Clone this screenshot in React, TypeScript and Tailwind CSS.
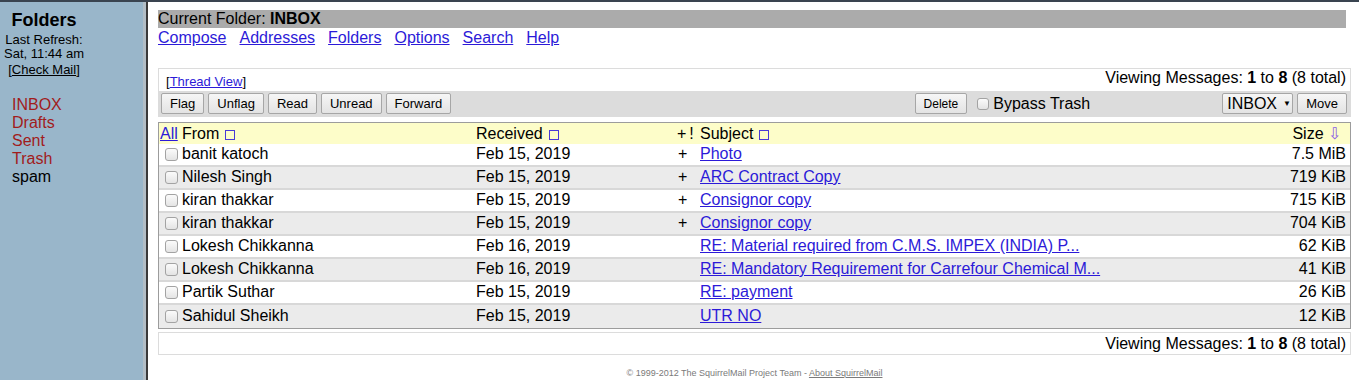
import React from 'react';

interface Msg {
  from: string;
  date: string;
  plus: boolean;
  subject: string;
  size: string;
}

const messages: Msg[] = [
  { from: 'banit katoch', date: 'Feb 15, 2019', plus: true, subject: 'Photo', size: '7.5 MiB' },
  { from: 'Nilesh Singh', date: 'Feb 15, 2019', plus: true, subject: 'ARC Contract Copy', size: '719 KiB' },
  { from: 'kiran thakkar', date: 'Feb 15, 2019', plus: true, subject: 'Consignor copy', size: '715 KiB' },
  { from: 'kiran thakkar', date: 'Feb 15, 2019', plus: true, subject: 'Consignor copy', size: '704 KiB' },
  { from: 'Lokesh Chikkanna', date: 'Feb 16, 2019', plus: false, subject: 'RE: Material required from C.M.S. IMPEX (INDIA) P...', size: '62 KiB' },
  { from: 'Lokesh Chikkanna', date: 'Feb 16, 2019', plus: false, subject: 'RE: Mandatory Requirement for Carrefour Chemical M...', size: '41 KiB' },
  { from: 'Partik Suthar', date: 'Feb 15, 2019', plus: false, subject: 'RE: payment', size: '26 KiB' },
  { from: 'Sahidul Sheikh', date: 'Feb 15, 2019', plus: false, subject: 'UTR NO', size: '12 KiB' },
];

const folders = [
  { name: 'INBOX', red: true },
  { name: 'Drafts', red: true },
  { name: 'Sent', red: true },
  { name: 'Trash', red: true },
  { name: 'spam', red: false },
];

const Check = () => (
  <span className="inline-block w-[13px] h-[13px] rounded-[3px] border border-[#a3a3a3] bg-gradient-to-b from-[#fbfbfb] to-[#e4e4e4]" />
);

const SortBox = () => (
  <span className="inline-block w-[10px] h-[10px] border border-[#4a3ad6] ml-[6px] translate-y-[1px]" />
);

const Btn = ({ label, small }: { label: string; small?: boolean }) => (
  <button className={`h-[21px] px-[8px] border border-[#a6a6a6] rounded-[2px] bg-gradient-to-b from-[#f6f6f6] to-[#e3e3e3] text-black leading-none ${small ? 'text-[12px]' : 'text-[13px]'}`}>
    {label}
  </button>
);

const Link = ({ children, className = '' }: { children: React.ReactNode; className?: string }) => (
  <a href="#" className={`text-[#2c1ad8] underline ${className}`}>{children}</a>
);

const ViewingText = () => (
  <span className="text-[16px] text-black">
    Viewing Messages: <b>1</b> to <b>8</b> (8 total)
  </span>
);

export default function App() {
  return (
    <div className="flex h-[380px] overflow-hidden bg-white border-t-2 border-[#3a4450] font-['Liberation_Sans',Arial,sans-serif] text-black">
      {/* left frame */}
      <div className="w-[143px] shrink-0 bg-[#99b6ca] pt-[7px]">
        <div className="w-[88px] text-center">
          <div className="text-[18px] font-bold leading-[22px]">Folders</div>
          <div className="mt-[2px] text-[13px] leading-[14px]">Last Refresh:</div>
          <div className="text-[13px] leading-[14px]">Sat, 11:44 am</div>
          <div className="mt-[1px] text-[13px] leading-[15px]">
            [<a href="#" className="text-black underline">Check Mail</a>]
          </div>
        </div>
        <div className="mt-[19px] pl-[12px]">
          {folders.map((f) => (
            <div key={f.name} className={`text-[16px] leading-[18px] ${f.red ? 'text-[#a11c1c]' : 'text-black'}`}>
              {f.name}
            </div>
          ))}
        </div>
      </div>
      <div className="w-[3px] shrink-0 bg-[#b3bec6]" />
      <div className="w-[2px] shrink-0 bg-[#3a3a3a]" />

      {/* right frame */}
      <div className="flex-1 pl-[10px] pr-[8px] pt-[8px]">
        <div className="mr-[5px] h-[18px] bg-[#ababab] text-[16px] leading-[18px]">
          Current Folder: <b>INBOX</b>
        </div>
        <div className="flex gap-[13px] text-[16px] leading-[18px] mt-[1px]">
          <Link>Compose</Link>
          <Link>Addresses</Link>
          <Link>Folders</Link>
          <Link>Options</Link>
          <Link>Search</Link>
          <Link>Help</Link>
        </div>

        <div className="mt-[21px] border border-[#dcdcdc]">
          <div className="flex h-[22px] items-end justify-between pl-[7px] pr-[4px] pb-[1px]">
            <span className="text-[13px] leading-[16px]">
              [<Link>Thread View</Link>]
            </span>
            <ViewingText />
          </div>
          <div className="flex h-[25px] items-center bg-[#dcdcdc] pl-[2px] pr-[3px]">
            <div className="flex gap-[4px]">
              <Btn label="Flag" />
              <Btn label="Unflag" />
              <Btn label="Read" />
              <Btn label="Unread" />
              <Btn label="Forward" />
            </div>
            <div className="ml-auto flex items-center">
              <Btn label="Delete" small />
              <span className="ml-[10px] inline-block w-[12px] h-[12px] rounded-[3px] border border-[#a3a3a3] bg-gradient-to-b from-[#fbfbfb] to-[#e4e4e4]" />
              <span className="ml-[4px] text-[16px]">Bypass Trash</span>
            </div>
            <div className="ml-[132px] flex items-center gap-[4px]">
              <div className="flex h-[21px] w-[71px] items-center gap-[6px] border border-[#a6a6a6] rounded-[2px] bg-gradient-to-b from-[#f6f6f6] to-[#e3e3e3] pl-[4px] text-[16px]">
                INBOX<span className="text-[8px]">▼</span>
              </div>
              <Btn label="Move" />
            </div>
          </div>
        </div>

        <div className="mt-[5px] border border-[#9c9c9c] text-[16px]">
          <div className="flex h-[21px] items-center bg-[#fdfdc9] leading-[18px]">
            <div className="w-[23px] pl-[1px] shrink-0 overflow-visible whitespace-nowrap">
              <Link>All</Link>
            </div>
            <div className="w-[294px] shrink-0">From<SortBox /></div>
            <div className="w-[201px] shrink-0">Received<SortBox /></div>
            <div className="w-[23px] shrink-0 flex gap-[3px]"><span>+</span><span>!</span></div>
            <div className="flex-1">Subject<SortBox /></div>
            <div className="pr-[9px]">Size <span className="text-[#8a5ce6]">⇩</span></div>
          </div>
          {messages.map((m, i) => (
            <div
              key={i}
              className={`flex h-[23px] items-center leading-[18px] pb-[1px] ${i % 2 === 0 ? 'bg-white' : 'bg-[#ebebeb]'} ${i < messages.length - 1 ? 'border-b-2 border-[#d8d8d8]' : ''}`}
            >
              <div className="w-[23px] shrink-0 pl-[6px] flex items-center"><Check /></div>
              <div className="w-[294px] shrink-0">{m.from}</div>
              <div className="w-[201px] shrink-0">{m.date}</div>
              <div className="w-[23px] shrink-0 pl-[1px]">{m.plus ? '+' : ''}</div>
              <div className="flex-1 whitespace-nowrap"><Link>{m.subject}</Link></div>
              <div className="pr-[4px] whitespace-nowrap">{m.size}</div>
            </div>
          ))}
        </div>

        <div className="mt-[3px] flex h-[23px] items-center justify-end border border-[#dcdcdc] pr-[4px]">
          <ViewingText />
        </div>

        <div className="mt-[12px] text-center text-[9px] leading-[12px] text-[#7a7a7a]">
          © 1999-2012 The SquirrelMail Project Team - <a href="#" className="underline text-[#7a7a7a]">About SquirrelMail</a>
        </div>
      </div>
    </div>
  );
}
